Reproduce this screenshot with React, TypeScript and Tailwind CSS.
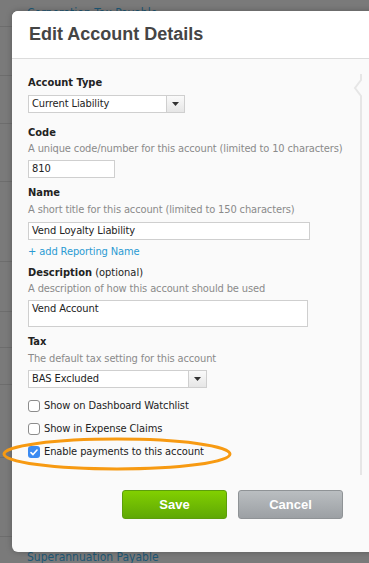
import React from "react";

const rowHeights = ["h-[27px]", "h-[49px]", "h-[48px]", "h-[58px]", "h-[80px]", "h-[50px]", "h-[36px]", "h-[37px]", "h-[73px]", "h-[79px]"];

function Label({ children }: { children: React.ReactNode }) {
  return <div className="text-[11px] leading-[14px] font-bold text-[#222]">{children}</div>;
}

function Help({ children }: { children: React.ReactNode }) {
  return <div className="text-[11px] leading-[14px] tracking-[-0.13px] text-[#8a8a8a]">{children}</div>;
}

function SelectBox({ value, width }: { value: string; width: string }) {
  return (
    <div className={`flex h-[18px] border border-[#cfcfcf] bg-white ${width}`}>
      <div className="flex-1 pl-[3px] text-[11px] leading-[16px] tracking-[-0.1px] text-[#222]">{value}</div>
      <div className="flex w-[18px] items-center justify-center border-l border-[#cfcfcf] bg-gradient-to-b from-[#fafafa] to-[#e6e6e6]">
        <svg width="7" height="4" viewBox="0 0 7 4">
          <path d="M0 0h7L3.5 4z" fill="#333" />
        </svg>
      </div>
    </div>
  );
}

function Check({ label, checked }: { label: string; checked?: boolean }) {
  return (
    <div className="flex h-[14px] items-center gap-[4px]">
      {checked ? (
        <span className="flex h-[12px] w-[12px] items-center justify-center rounded-[3px] bg-[#3b8bf2]">
          <svg width="8" height="7" viewBox="0 0 8 7">
            <path d="M1 3.6l2 2L7 1" stroke="#fff" strokeWidth="1.6" fill="none" strokeLinecap="round" strokeLinejoin="round" />
          </svg>
        </span>
      ) : (
        <span className="h-[12px] w-[12px] rounded-[3px] border border-[#8c8c8c] bg-white" />
      )}
      <span className="text-[11px] leading-[14px] tracking-[-0.1px] text-[#222]">{label}</span>
    </div>
  );
}

export default function App() {
  return (
    <div
      className="relative h-[563px] w-[369px] overflow-hidden bg-[#7a7a7a]"
      style={{ fontFamily: '"DejaVu Sans Condensed", Tahoma, "Liberation Sans", sans-serif' }}
    >
      {/* page behind the overlay */}
      <div className="flex flex-col">
        {rowHeights.map((h, i) => (
          <div key={i} className={`${h} border-b border-[#6d6d6d]`}>
            {i === 0 && <div className="pl-[27px] pt-[6px] text-[12px] leading-[14px] text-[#1d5775]">Corporation Tax Payable</div>}
          </div>
        ))}
        <div className="pl-[27px] pt-[13px] text-[12px] leading-[14px] text-[#1d5775]">Superannuation Payable</div>
      </div>

      {/* modal */}
      <div className="absolute left-[12px] top-[11px] flex h-[541px] w-[380px] flex-col overflow-hidden rounded-[6px] bg-[#fafafa] shadow-[0_0_6px_rgba(0,0,0,0.25)]">
        <div className="flex h-[48px] items-center border-b border-[#dcdcdc] bg-white pl-[17px]">
          <h1 className="text-[18px] font-bold text-[#454545]" style={{ fontFamily: '"Liberation Sans", Arial, sans-serif' }}>
            Edit Account Details
          </h1>
        </div>

        <div className="relative flex-1 pl-[16px] pt-[17px]">
          <svg className="absolute left-[341px] top-[15px]" width="10" height="401" viewBox="0 0 10 401">
            <path d="M8 0V6L2 14L8 22V401" stroke="#e6e6e6" strokeWidth="2" fill="none" />
          </svg>

          <Label>Account Type</Label>
          <div className="mt-[5px]">
            <SelectBox value="Current Liability" width="w-[157px]" />
          </div>

          <div className="mt-[13px]">
            <Label>Code</Label>
          </div>
          <div className="mt-[2px]">
            <Help>A unique code/number for this account (limited to 10 characters)</Help>
          </div>
          <div className="mt-[4px] h-[18px] w-[87px] border border-[#cfcfcf] bg-white pl-[3px] text-[11px] leading-[16px] text-[#222]">810</div>

          <div className="mt-[8px]">
            <Label>Name</Label>
          </div>
          <div className="mt-[3px]">
            <Help>A short title for this account (limited to 150 characters)</Help>
          </div>
          <div className="mt-[5px] h-[18px] w-[282px] border border-[#cfcfcf] bg-white pl-[3px] text-[11px] leading-[16px] tracking-[-0.1px] text-[#222]">
            Vend Loyalty Liability
          </div>
          <div className="mt-[5px] text-[11px] leading-[14px] tracking-[-0.1px] text-[#2a9ad3]">+ add Reporting Name</div>

          <div className="mt-[7px] text-[11px] leading-[14px] text-[#222]">
            <span className="font-bold">Description</span> (optional)
          </div>
          <div className="mt-[2px]">
            <Help>A description of how this account should be used</Help>
          </div>
          <div className="mt-[4px] h-[27px] w-[280px] border border-[#cfcfcf] bg-white pl-[3px] pt-[1px] text-[11px] leading-[14px] tracking-[-0.1px] text-[#222]">
            Vend Account
          </div>

          <div className="mt-[8px]">
            <Label>Tax</Label>
          </div>
          <div className="mt-[3px]">
            <Help>The default tax setting for this account</Help>
          </div>
          <div className="mt-[4px]">
            <SelectBox value="BAS Excluded" width="w-[179px]" />
          </div>

          <div className="mt-[11px] flex flex-col gap-[9px]">
            <Check label="Show on Dashboard Watchlist" />
            <Check label="Show in Expense Claims" />
            <Check label="Enable payments to this account" checked />
          </div>

          <div className="mt-[31px] flex gap-[11px] pl-[94px]" style={{ fontFamily: '"Liberation Sans", Arial, sans-serif' }}>
            <button className="h-[29px] w-[105px] rounded-[3px] border border-[#5c9e0c] bg-gradient-to-b from-[#82d000] to-[#5fa805] text-[13px] font-bold text-white">
              Save
            </button>
            <button className="h-[29px] w-[105px] rounded-[3px] border border-[#8f9396] bg-gradient-to-b from-[#babec1] to-[#9ca0a4] text-[13px] font-bold text-white">
              Cancel
            </button>
          </div>
        </div>
      </div>

      {/* highlight ring */}
      <svg className="absolute left-0 top-[436px]" width="236" height="36" viewBox="0 0 236 36">
        <ellipse cx="117" cy="18" rx="113" ry="15" stroke="#f79a12" strokeWidth="3" fill="none" />
      </svg>
    </div>
  );
}
